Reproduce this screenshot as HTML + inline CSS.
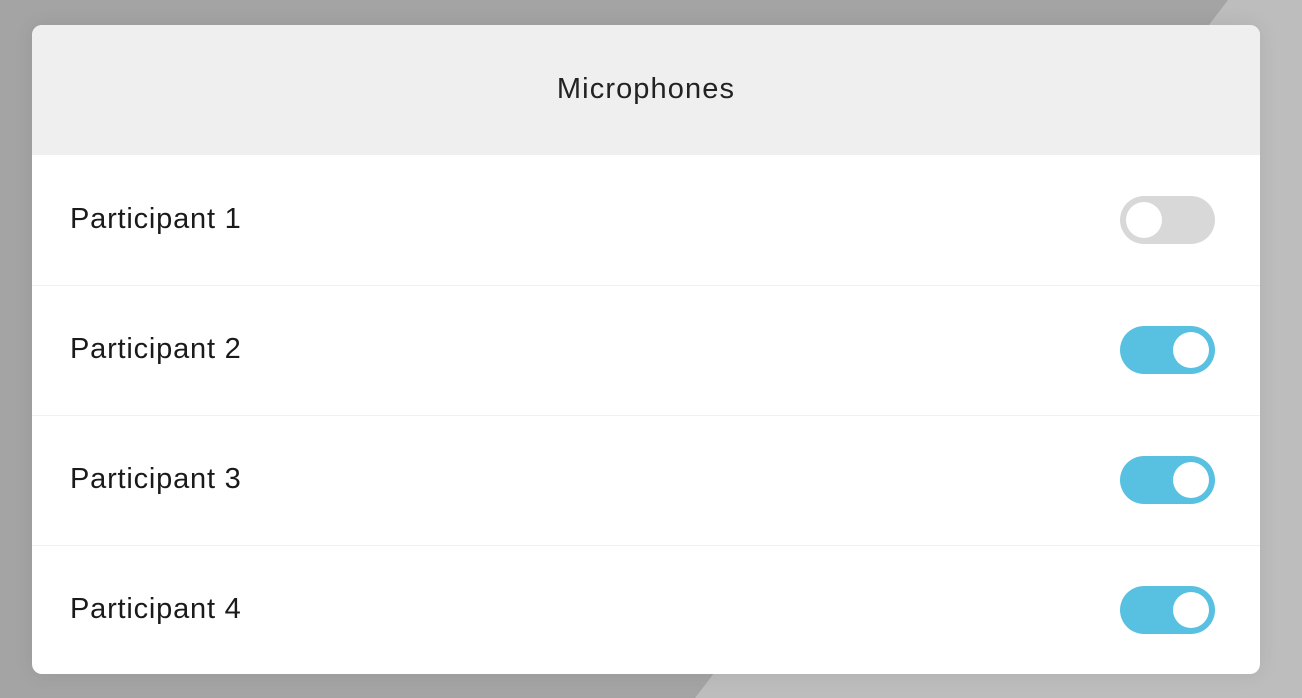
<!DOCTYPE html>
<html><head><style>
body{margin:0;width:1302px;height:698px;overflow:hidden;position:relative;font-family:"Liberation Sans",sans-serif;background:#a4a4a4}
.bg{position:absolute;inset:0;background:#bdbdbd;clip-path:polygon(1228px 0,1302px 0,1302px 698px,695px 698px)}
.card{position:absolute;left:32px;top:25px;width:1228px;height:649px;background:#fff;border-radius:10px;overflow:hidden;box-shadow:0 0 20px rgba(0,0,0,.08)}
.hd{height:130px;background:#efefef;text-align:center;line-height:128px;font-size:29px;color:#222;letter-spacing:1.1px}
.row{height:129px;border-top:1px solid #f0f0f0;position:relative}
.row span{position:absolute;left:38px;top:-1px;line-height:129px;font-size:29px;color:#1a1a1a;letter-spacing:0.8px}
.tg{position:absolute;left:1088px;top:40px;width:95px;height:48px;border-radius:24px;background:#d8d8d8}
.tg i{position:absolute;left:6px;top:6px;width:36px;height:36px;border-radius:50%;background:#fff}
.on{background:#58c0e0}.on i{left:53px}
</style></head><body><div class="bg"></div>
<div class="card"><div class="hd">Microphones</div>
<div class="row" style="border-top:none;height:130px"><span style="line-height:130px">Participant 1</span><div class="tg" style="top:41px"><i></i></div></div>
<div class="row"><span>Participant 2</span><div class="tg on"><i></i></div></div>
<div class="row"><span>Participant 3</span><div class="tg on"><i></i></div></div>
<div class="row"><span>Participant 4</span><div class="tg on"><i></i></div></div>
</div></body></html>
